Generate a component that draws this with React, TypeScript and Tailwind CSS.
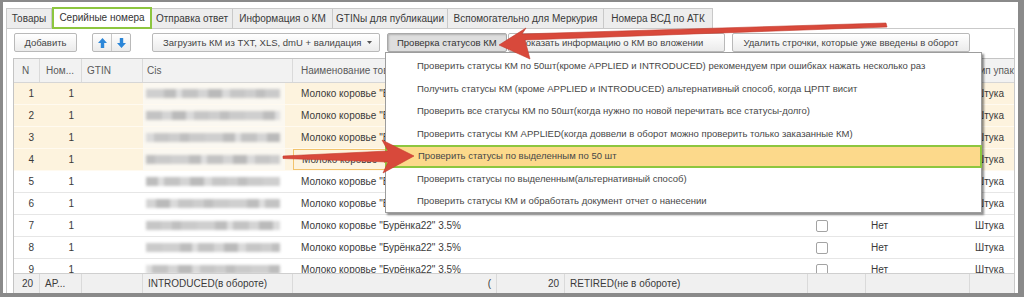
const tabs = [
  { label: "Товары", w: "w-[46px] border-l" },
  { label: "Серийные номера", w: "w-[100px]", active: true },
  { label: "Отправка ответ", w: "w-[81px]" },
  { label: "Информация о КМ", w: "w-[100px]" },
  { label: "GTINы для публикации", w: "w-[115px]" },
  { label: "Вспомогательно для Меркурия", w: "w-[156px]" },
  { label: "Номера ВСД по АТК", w: "w-[109px]" },
];

const menuItems = [
  "Проверить статусы КМ по 50шт(кроме APPLIED и INTRODUCED) рекомендуем при ошибках нажать несколько раз",
  "Получить статусы КМ (кроме APPLIED и INTRODUCED) альтернативный способ, когда ЦРПТ висит",
  "Проверить все статусы КМ по 50шт(когда нужно по новой перечитать все статусы-долго)",
  "Проверить статусы КМ APPLIED(когда доввели в оборот можно проверить только заказанные КМ)",
  "Проверить статусы по выделенным по 50 шт",
  "Проверить статусы по выделенным(альтернативный способ)",
  "Проверить статусы КМ и обработать документ отчет о нанесении",
];

// blurred barcode blocks in the Cis column
const segs = [
  "w-[18px] bg-[#cfcfcf]",
  "w-[12px] bg-[#bdbdbd]",
  "w-[6px] bg-[#dedede]",
  "w-[16px] bg-[#c3c3c3]",
  "w-[10px] bg-[#d4d4d4]",
  "w-[14px] bg-[#bababa]",
  "w-[8px] bg-[#dadada]",
  "w-[15px] bg-[#c6c6c6]",
  "w-[11px] bg-[#cdcdcd]",
  "w-[9px] bg-[#bfbfbf]",
  "w-[16px] bg-[#cacaca]",
];

const rows = [1, 2, 3, 4, 5, 6, 7, 8, 9];
const productName = "Молоко коровье \"Бурёнка22\" 3.5%";

function Arrow({ dir }: { dir: "up" | "down" }) {
  return (
    <svg width="9" height="10" viewBox="0 0 9 10">
      {dir === "up" ? (
        <polygon points="4.5,0 9,5 6.2,5 6.2,10 2.8,10 2.8,5 0,5" fill="#2b86d8" />
      ) : (
        <polygon points="4.5,10 9,5 6.2,5 6.2,0 2.8,0 2.8,5 0,5" fill="#2b86d8" />
      )}
    </svg>
  );
}

function Tabs() {
  return (
    <div className="flex items-end h-[21px] mt-[5px]">
      {tabs.map((t) =>
        t.active ? (
          <div
            key={t.label}
            className="relative z-10 w-[100px] h-[22px] -mb-[1px] border-2 border-[#8dc63f] bg-white flex items-center justify-center text-[#333]"
          >
            {t.label}
          </div>
        ) : (
          <div
            key={t.label}
            className={`${t.w} h-[20px] border-t border-r border-[#c9c9c9] bg-[#ededed] flex items-center justify-center text-[#3a3a3a]`}
          >
            {t.label}
          </div>
        )
      )}
    </div>
  );
}

function Toolbar() {
  const btn =
    "h-[19px] border border-[#b9b9b9] rounded-[2px] bg-gradient-to-b from-white to-[#ebebeb] flex items-center text-[#444] whitespace-nowrap";
  return (
    <div className="flex items-center h-[19px] text-[9.5px]">
      <div className={`${btn} ml-[1px] w-[63px] justify-center`}>Добавить</div>
      <div className={`${btn} ml-[15px] w-[39px]`}>
        <div className="w-[19px] h-full flex items-center justify-center border-r border-[#c8c8c8]">
          <Arrow dir="up" />
        </div>
        <div className="flex-1 h-full flex items-center justify-center">
          <Arrow dir="down" />
        </div>
      </div>
      <div className={`${btn} ml-[21px] w-[228px] pl-[10px] gap-[6px]`}>
        <span>Загрузить КМ из TXT, XLS, dmU + валидация</span>
        <svg width="5" height="3" viewBox="0 0 5 3">
          <polygon points="0,0 5,0 2.5,3" fill="#555" />
        </svg>
      </div>
      <div className="h-[19px] ml-[7px] w-[120px] border border-[#a9a9a9] rounded-[2px] bg-[#dedede] shadow-[inset_1px_1px_2px_rgba(0,0,0,0.2)] flex items-center pl-[9px] text-[#333] whitespace-nowrap">
        Проверка статусов КМ
      </div>
      <div className={`${btn} ml-[1px] w-[217px] pl-[10px]`}>
        Показать информацию о КМ во вложении
      </div>
      <div className={`${btn} ml-[7px] w-[238px] justify-center`}>
        Удалить строчки, которые уже введены в оборот
      </div>
    </div>
  );
}

function CisBlur({ i, selected }: { i: number; selected: boolean }) {
  const rot = [...segs.slice(i % segs.length), ...segs.slice(0, i % segs.length)];
  return (
    <div className="w-[150px] h-full flex items-center">
      <div
        className={`w-[142px] h-full flex items-center pl-[3px] ${
          selected ? "bg-[#fbf8f1]" : "bg-white"
        }`}
      >
        <div className="flex h-[9px] w-[134px] overflow-hidden blur-[1.6px]">
          {rot.map((s, k) => (
            <div key={k} className={`${s} h-full shrink-0`} />
          ))}
        </div>
      </div>
    </div>
  );
}

function Table() {
  const hc = "h-full flex items-center border-r border-[#dadada] shrink-0";
  return (
    <div className="mt-[6px] flex-1 min-h-0 flex flex-col border-l border-t border-[#c4c4c4]">
      {/* header */}
      <div className="h-[24px] shrink-0 flex bg-[#f2f2f2] border-b border-[#d6d6d6] text-[#5a5a5a]">
        <div className={`${hc} w-[26px] pl-[8px]`}>N</div>
        <div className={`${hc} w-[42px] pl-[6px]`}>Ном...</div>
        <div className={`${hc} w-[61px] pl-[5px]`}>GTIN</div>
        <div className={`${hc} w-[150px] pl-[4px]`}>Cis</div>
        <div className={`${hc} w-[204px] pl-[8px] overflow-hidden whitespace-nowrap`}>Наименование товара</div>
        <div className={`${hc} w-[68px] pl-[5px]`}>Кол-во</div>
        <div className={`${hc} w-[243px] pl-[5px]`}>Статус</div>
        <div className={`${hc} w-[58px] pl-[5px]`}>Выбор</div>
        <div className={`${hc} w-[104px] pl-[5px]`}>Ошибка</div>
        <div className="h-full flex-1 min-w-0 flex items-center pl-[4px] overflow-hidden whitespace-nowrap">Тип упаковки</div>
      </div>

      {/* body */}
      <div className="flex-1 min-h-0 overflow-hidden">
        {rows.map((n, i) => {
          const selected = n <= 4;
          return (
            <div
              key={n}
              className={`h-[22px] flex border-b ${
                selected ? "bg-[#fdf3de] border-[#fffaf0]" : "bg-white border-[#e6e6e6]"
              } text-[#3a3a3a]`}
            >
              <div className="w-[26px] h-full flex items-center justify-end pr-[6px] shrink-0">{n}</div>
              <div className="w-[42px] h-full flex items-center justify-end pr-[8px] shrink-0">1</div>
              <div className="w-[61px] h-full shrink-0" />
              <CisBlur i={i * 3} selected={selected} />
              <div
                className={`w-[204px] h-full flex items-center pl-[8px] whitespace-nowrap shrink-0 ${
                  n === 4 ? "border border-[#f2c36c]" : ""
                }`}
              >
                {productName}
              </div>
              <div className="w-[68px] h-full shrink-0" />
              <div className="w-[243px] h-full shrink-0" />
              <div className="w-[58px] h-full flex items-center pl-[8px] shrink-0">
                <div className="w-[12px] h-[12px] border border-[#a3a3a3] rounded-[2px] bg-white" />
              </div>
              <div className="w-[104px] h-full flex items-center pl-[5px] shrink-0">Нет</div>
              <div className="flex-1 h-full flex items-center pl-[5px]">Штука</div>
            </div>
          );
        })}
      </div>

      {/* footer */}
      <div className="h-[20px] shrink-0 flex bg-[#f0f0f0] border-t border-[#cfcfcf] text-[#3a3a3a]">
        <div className={`${hc} w-[26px] justify-end pr-[6px]`}>20</div>
        <div className={`${hc} w-[42px] pl-[5px]`}>AP...</div>
        <div className={`${hc} w-[61px]`} />
        <div className={`${hc} w-[150px] pl-[5px]`}>INTRODUCED(в обороте)</div>
        <div className={`${hc} w-[204px] justify-end pr-[5px]`}>(</div>
        <div className={`${hc} w-[68px] justify-end pr-[5px]`}>20</div>
        <div className={`${hc} w-[243px] pl-[5px]`}>RETIRED(не в обороте)</div>
        <div className={`${hc} w-[58px]`} />
        <div className={`${hc} w-[104px]`} />
        <div className="flex-1" />
      </div>
    </div>
  );
}

function Menu() {
  return (
    <div className="absolute left-[385px] top-[52px] w-[597px] h-[161px] bg-white border border-[#9d9d9d] shadow-[2px_2px_2px_rgba(0,0,0,0.45)] pt-[2px] text-[9.5px] text-[#474747]">
      {menuItems.map((m, i) =>
        i === 4 ? (
          <div
            key={i}
            className="h-[23px] -mx-[1px] flex items-center pl-[31px] bg-[#fcd98b] border-2 border-[#8dc63f] whitespace-nowrap"
          >
            {m}
          </div>
        ) : (
          <div key={i} className="h-[22.4px] flex items-center pl-[31px] whitespace-nowrap">
            {m}
          </div>
        )
      )}
    </div>
  );
}

function Arrows() {
  return (
    <svg
      className="absolute left-0 top-0 pointer-events-none"
      width="1024"
      height="297"
      viewBox="0 0 1024 297"
    >
      <polygon
        points="499,45 526,28 522,34 886,23 887,27 525,40 530,59"
        fill="#d8493b"
        stroke="#c23b2e"
        strokeWidth="0.6"
        strokeLinejoin="round"
      />
      <polygon
        points="414,156 382,140 388,151 283,156 283,158.5 388,162 383,173"
        fill="#d8493b"
        stroke="#c23b2e"
        strokeWidth="0.6"
        strokeLinejoin="round"
      />
    </svg>
  );
}

export default function App() {
  return (
    <div className="relative w-[1024px] h-[297px] overflow-hidden bg-[#8a8a8a] pt-[2px] pl-[3px] pr-[6px] pb-[4px] font-['Liberation_Sans',Arial,sans-serif] text-[10px] leading-none text-[#3c3c3c]">
      <div className="h-full flex flex-col bg-white pl-[3px] pr-[3px]">
        <Tabs />
        <div className="flex-1 min-h-0 flex flex-col border-t border-l border-r border-[#c9c9c9] pt-[4px] pl-[6px]">
          <Toolbar />
          <Table />
        </div>
      </div>
      <Menu />
      <Arrows />
    </div>
  );
}
